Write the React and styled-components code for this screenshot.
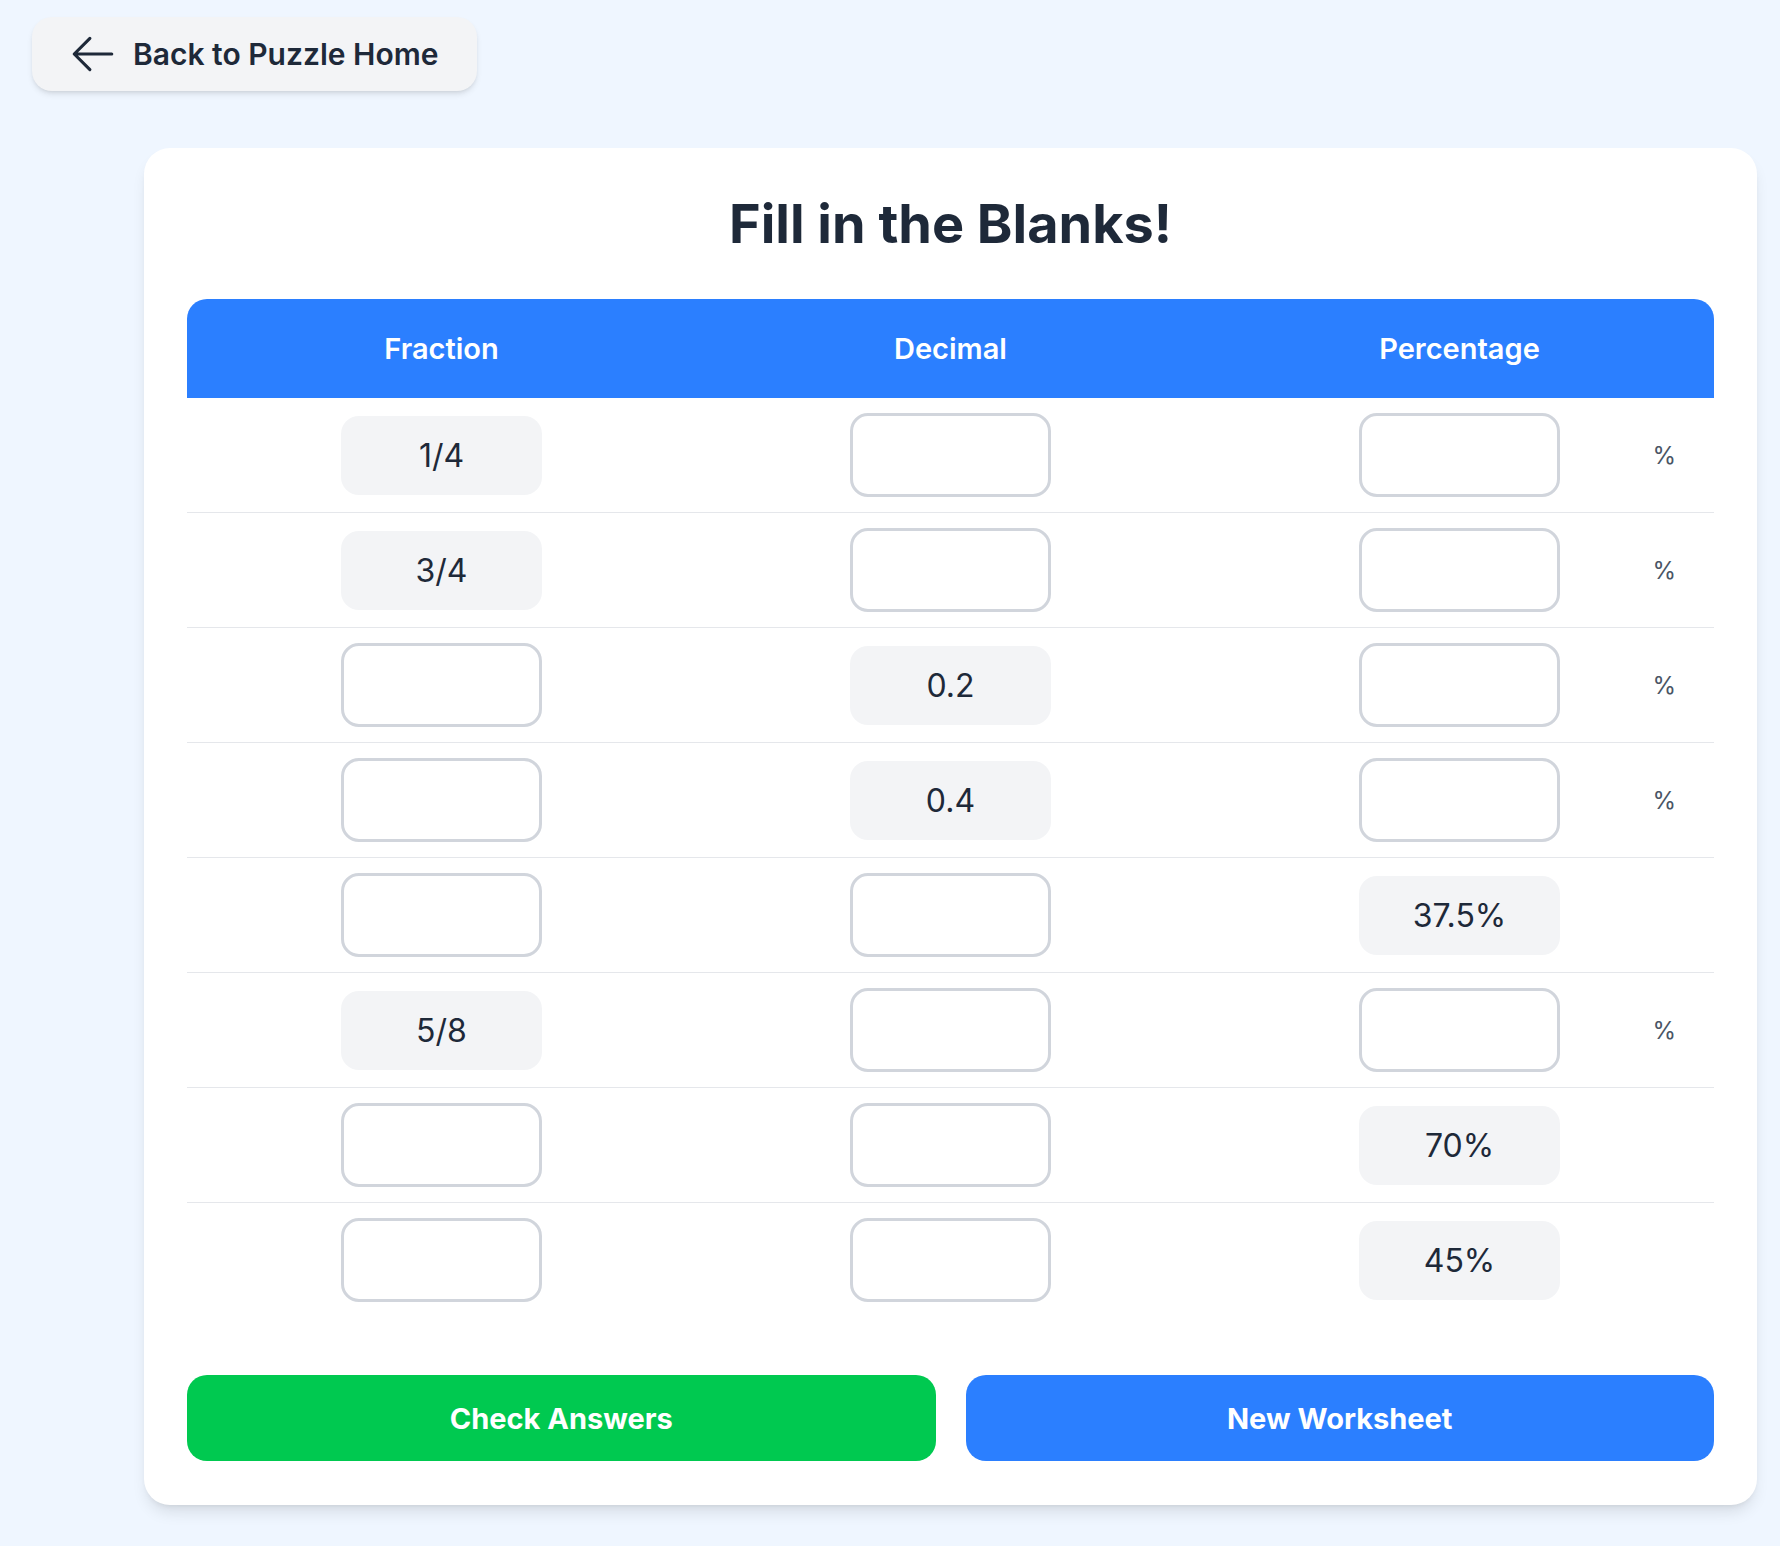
import React from 'react'
import styled, { createGlobalStyle } from 'styled-components'

const GlobalStyle = createGlobalStyle`
  * { box-sizing: border-box; }
  body {
    margin: 0;
    background: #eff6ff;
    font-family: Inter, "Noto Sans", sans-serif;
    color: #1e2939;
  }
`

const Page = styled.div`
  min-height: 100vh;
  padding: 17px 23px 41px 32px;
  display: flex;
  flex-direction: column;
  align-items: flex-start;
`

const BackButton = styled.button`
  display: inline-flex;
  align-items: center;
  gap: 15px;
  height: 74px;
  padding: 0 39px 0 36px;
  background: #f3f4f6;
  border: 0;
  border-radius: 20px;
  box-shadow: 0 4px 6px -1px rgba(0,0,0,0.1), 0 2px 4px -2px rgba(0,0,0,0.1);
  font-family: Inter, sans-serif;
  font-size: 30px;
  font-weight: 600;
  color: #1e2939;
  cursor: pointer;
`

const Card = styled.div`
  align-self: flex-end;
  width: 1613px;
  margin-top: 57px;
  background: #ffffff;
  border-radius: 26px;
  box-shadow: 0 10px 15px -3px rgba(0,0,0,0.1), 0 4px 6px -4px rgba(0,0,0,0.1);
  padding: 43px 43px 44px;
`

const Title = styled.h1`
  margin: 0 0 43px;
  text-align: center;
  font-size: 54px;
  line-height: 65px;
  font-weight: 700;
  color: #1e2939;
`

const Grid = styled.div`
  display: grid;
  grid-template-columns: repeat(3, 1fr);
`

const HeadRow = styled(Grid)`
  height: 99px;
  background: #2b7fff;
  border-radius: 20px 20px 0 0;
  align-items: center;
`

const HeadCell = styled.div`
  text-align: center;
  color: #ffffff;
  font-size: 29px;
  font-weight: 600;
`

const Row = styled(Grid)`
  padding: 15px 0;
  align-items: center;
  border-bottom: ${p => (p.$last ? '0' : '1px solid #e5e7eb')};
`

const Cell = styled.div`
  display: grid;
  grid-template-columns: 1fr 201px 1fr;
  align-items: center;
`

const Blank = styled.input`
  grid-column: 2;
  width: 201px;
  height: 84px;
  border: 3px solid #d1d5dc;
  border-radius: 18px;
  background: #ffffff;
  font-family: Inter, sans-serif;
  font-size: 32px;
  text-align: center;
  color: #1e2939;
  outline: none;
`

const Given = styled.div`
  grid-column: 2;
  height: 79px;
  border-radius: 18px;
  background: #f3f4f6;
  display: flex;
  align-items: center;
  justify-content: center;
  font-size: 32px;
  font-weight: 400;
  color: #1e2939;
`

const Suffix = styled.span`
  grid-column: 3;
  justify-self: end;
  padding-right: 38px;
  font-size: 24px;
  color: #4a5565;
`

const Actions = styled.div`
  display: grid;
  grid-template-columns: 1fr 1fr;
  gap: 30px;
  margin-top: 58px;
`

const ActionButton = styled.button`
  height: 86px;
  border: 0;
  border-radius: 20px;
  background: ${p => p.$bg};
  color: #ffffff;
  font-family: Inter, sans-serif;
  font-size: 29px;
  font-weight: 700;
  cursor: pointer;
`

const ArrowLeft = () => (
  <svg width="50" height="50" viewBox="0 0 24 24" fill="none" stroke="#1e2939" strokeWidth="1.5" strokeLinecap="round" strokeLinejoin="round">
    <path d="M10.5 19.5 3 12m0 0 7.5-7.5M3 12h18" />
  </svg>
)

const rows = [
  { fraction: '1/4', decimal: null, percent: null },
  { fraction: '3/4', decimal: null, percent: null },
  { fraction: null, decimal: '0.2', percent: null },
  { fraction: null, decimal: '0.4', percent: null },
  { fraction: null, decimal: null, percent: '37.5%' },
  { fraction: '5/8', decimal: null, percent: null },
  { fraction: null, decimal: null, percent: '70%' },
  { fraction: null, decimal: null, percent: '45%' },
]

function Slot({ value, suffix }) {
  return (
    <Cell>
      {value ? <Given>{value}</Given> : <Blank type="text" />}
      {!value && suffix && <Suffix>{suffix}</Suffix>}
    </Cell>
  )
}

export default function App() {
  return (
    <>
      <GlobalStyle />
      <Page>
        <BackButton>
          <ArrowLeft />
          Back to Puzzle Home
        </BackButton>
        <Card>
          <Title>Fill in the Blanks!</Title>
          <HeadRow>
            <HeadCell>Fraction</HeadCell>
            <HeadCell>Decimal</HeadCell>
            <HeadCell>Percentage</HeadCell>
          </HeadRow>
          {rows.map((r, i) => (
            <Row key={i} $last={i === rows.length - 1}>
              <Slot value={r.fraction} />
              <Slot value={r.decimal} />
              <Slot value={r.percent} suffix="%" />
            </Row>
          ))}
          <Actions>
            <ActionButton $bg="#00c950">Check Answers</ActionButton>
            <ActionButton $bg="#2b7fff">New Worksheet</ActionButton>
          </Actions>
        </Card>
      </Page>
    </>
  )
}
